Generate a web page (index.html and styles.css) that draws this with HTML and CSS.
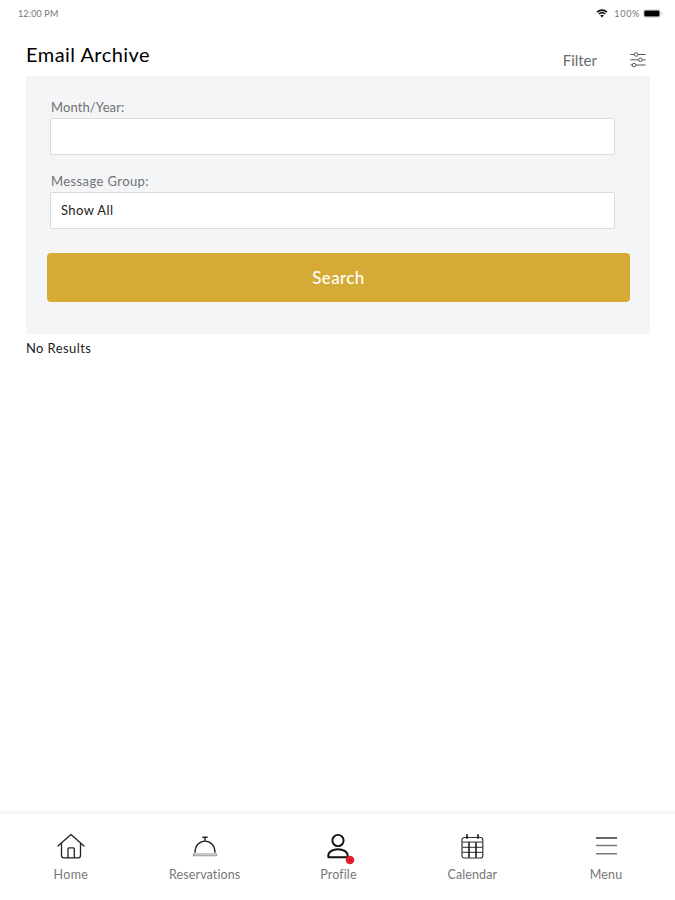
FILE: index.html
```html
<!DOCTYPE html>
<html lang="en">
<head>
<meta charset="utf-8">
<title>Email Archive</title>
<link rel="stylesheet" href="styles.css">
</head>
<body>
<div class="status">
  <span class="time">12:00 PM</span>
  <div class="device">
    <svg class="wifi" viewBox="0 0 12 9" width="12" height="9"><path d="M1 3.2Q6-1 11 3.2M2.8 5Q6 2.4 9.2 5" fill="none" stroke="#111" stroke-width="1.6"/><path d="M4.2 6.4Q6 5 7.8 6.4L6 8.6z" fill="#111"/></svg>
    <span class="percent">100%</span>
    <svg class="battery" viewBox="0 0 20 9" width="20" height="9"><rect x=".5" y=".5" width="17" height="8" rx="2" fill="none" stroke="#ddd"/><rect x="1.3" y="1.5" width="15.2" height="6" rx="1" fill="#000"/><path d="M19 3.5v2" stroke="#ccc"/></svg>
  </div>
</div>
<header class="header">
  <h1 class="title">Email Archive</h1>
  <div class="filter">
    <span class="filter-label">Filter</span>
    <svg viewBox="0 0 16 16" width="16" height="16" fill="none" stroke="#555" stroke-width="1"><path d="M.5 2.5h4M8 2.5h7.5M.5 7.8h8M12.2 7.8h3.3M.5 13h1.7M6 13h9.5"/><circle cx="6.2" cy="2.5" r="1.8"/><circle cx="10.4" cy="7.8" r="1.8"/><circle cx="4.1" cy="13" r="1.8"/></svg>
  </div>
</header>
<main class="main">
  <form class="panel">
    <label class="label month" for="month">Month/Year:</label>
    <div class="field" id="month"></div>
    <label class="label group" for="group">Message Group:</label>
    <div class="field" id="group"><span class="value">Show All</span></div>
    <button class="search" type="button"><span>Search</span></button>
  </form>
  <p class="empty">No Results</p>
</main>
<nav class="tabs">
  <a class="tab"><svg viewBox="0 0 28 28" width="28" height="28" fill="none" stroke="#222" stroke-width="1.3" stroke-linejoin="round" stroke-linecap="round"><path d="M1 14.1L14 2.5l13 11.6M4.5 11.3v12.2q0 2.3 2.3 2.3h14.4q2.3 0 2.3-2.3V11.3"/><path d="M11 25.6v-8.7q0-1 1-1h4.3q1 0 1 1v8.7"/></svg><span class="name home">Home</span></a>
  <a class="tab"><svg viewBox="0 0 28 28" width="28" height="28" fill="none" stroke="#222" stroke-width="1.4"><path d="M11.4 5.3h5.2M14 5.3v3.5M4 20.7C4 5.3 24 5.3 24 20.7"/><rect x="2.5" y="22" width="23" height="1.8" stroke="#777" stroke-width=".8"/></svg><span class="name reservations">Reservations</span></a>
  <a class="tab"><svg viewBox="0 0 28 28" width="28" height="28" fill="none" stroke="#111" stroke-width="1.9"><circle cx="14" cy="8.5" r="5.6"/><path d="M4.3 25.3v-1.5C4.3 15 23.7 15 23.7 23.8v1.5z" stroke-linejoin="round"/><circle cx="26" cy="28" r="4.3" fill="#e5222b" stroke="none"/><path d="M24.3 27.4l1.8 1.6 1.7-2" stroke="#a61620" stroke-width="1"/></svg><span class="name profile">Profile</span></a>
  <a class="tab"><svg viewBox="0 0 28 28" width="28" height="28" fill="none" stroke="#333" stroke-width="1.2"><rect x="4" y="5.5" width="20.8" height="20.5" rx="2.2"/><path d="M9 2.3v4.5M20 2.3v4.5" stroke="#111" stroke-width="1.6"/><path d="M4 10.2h20.8M4.5 15.4h20M4.5 20.4h20" stroke="#555"/><path d="M11 10.3v15.5M18 10.3v15.5" stroke="#111" stroke-width="1.5"/></svg><span class="name calendar">Calendar</span></a>
  <a class="tab"><svg viewBox="0 0 28 28" width="28" height="28" fill="none"><path d="M4 6h21" stroke="#333" stroke-width="1.5"/><path d="M4 13.6h21M4 21.8h21" stroke="#777" stroke-width="1.5"/></svg><span class="name menu">Menu</span></a>
</nav>
</body>
</html>
```

FILE: styles.css
```css
* { box-sizing: border-box; }
body {
  margin: 0;
  height: 900px;
  display: flex;
  flex-direction: column;
  background: #fff;
  color: #222;
  font-family: Lato, sans-serif;
  font-variant-ligatures: none;
  overflow: hidden;
}
.status {
  height: 27px;
  padding: 0 12px 0 18px;
  display: flex;
  align-items: center;
  justify-content: space-between;
  font-size: 9px;
  color: #777;
}
.time { letter-spacing: .15px; }
.device { display: flex; align-items: center; }
.percent { margin: 0 3px 0 6px; letter-spacing: .7px; }
.header {
  height: 49px;
  padding: 0 29px 0 26px;
  display: flex;
  justify-content: space-between;
}
.title {
  margin: 14px 0 0;
  font-size: 20px;
  line-height: 26px;
  font-weight: 400;
  color: #000;
  letter-spacing: .46px;
}
.filter { display: flex; align-items: center; gap: 33px; padding-top: 16px; }
.filter-label { font-size: 15px; color: #6a6a6a; }
.main { flex: 1; padding: 0 25px 0 26px; }
.panel {
  height: 258px;
  padding: 21px 20px 0 21px;
  background: #f3f5f7;
}
.label {
  display: block;
  margin-left: 4px;
  height: 21px;
  line-height: 21px;
  font-size: 13px;
  color: #707376;
}
.month { letter-spacing: .1px; }
.group { margin-top: 16px; letter-spacing: .4px; }
.field {
  height: 37px;
  margin: 0 15px 0 3px;
  padding: 0 0 2px 10px;
  display: flex;
  align-items: center;
  border: 1px solid #d9dbe1;
  border-radius: 2px;
  background: #fff;
  font-size: 13px;
  letter-spacing: .4px;
  color: #222;
}
.search {
  display: block;
  width: 100%;
  height: 49px;
  margin-top: 24px;
  padding: 0;
  border: 0;
  border-radius: 4px;
  background: #d6ab35;
  color: #fff;
  font: 500 17px Lato, sans-serif;
  letter-spacing: .35px;
}
.empty { margin: 5px 0 0; font-size: 13px; line-height: 18px; letter-spacing: .4px; }
.tabs {
  height: 89px;
  padding: 18px 2px 0 4px;
  display: grid;
  grid-template-columns: repeat(5, 1fr);
  border-top: 3px solid #f7f7f7;
}
.tab { display: flex; flex-direction: column; align-items: center; }
.tab svg { overflow: visible; }
.name { margin-top: 6px; font-size: 12.5px; line-height: 18px; color: #777; letter-spacing: .1px; }
.home { letter-spacing: .4px; }
.menu { letter-spacing: .2px; }
```
